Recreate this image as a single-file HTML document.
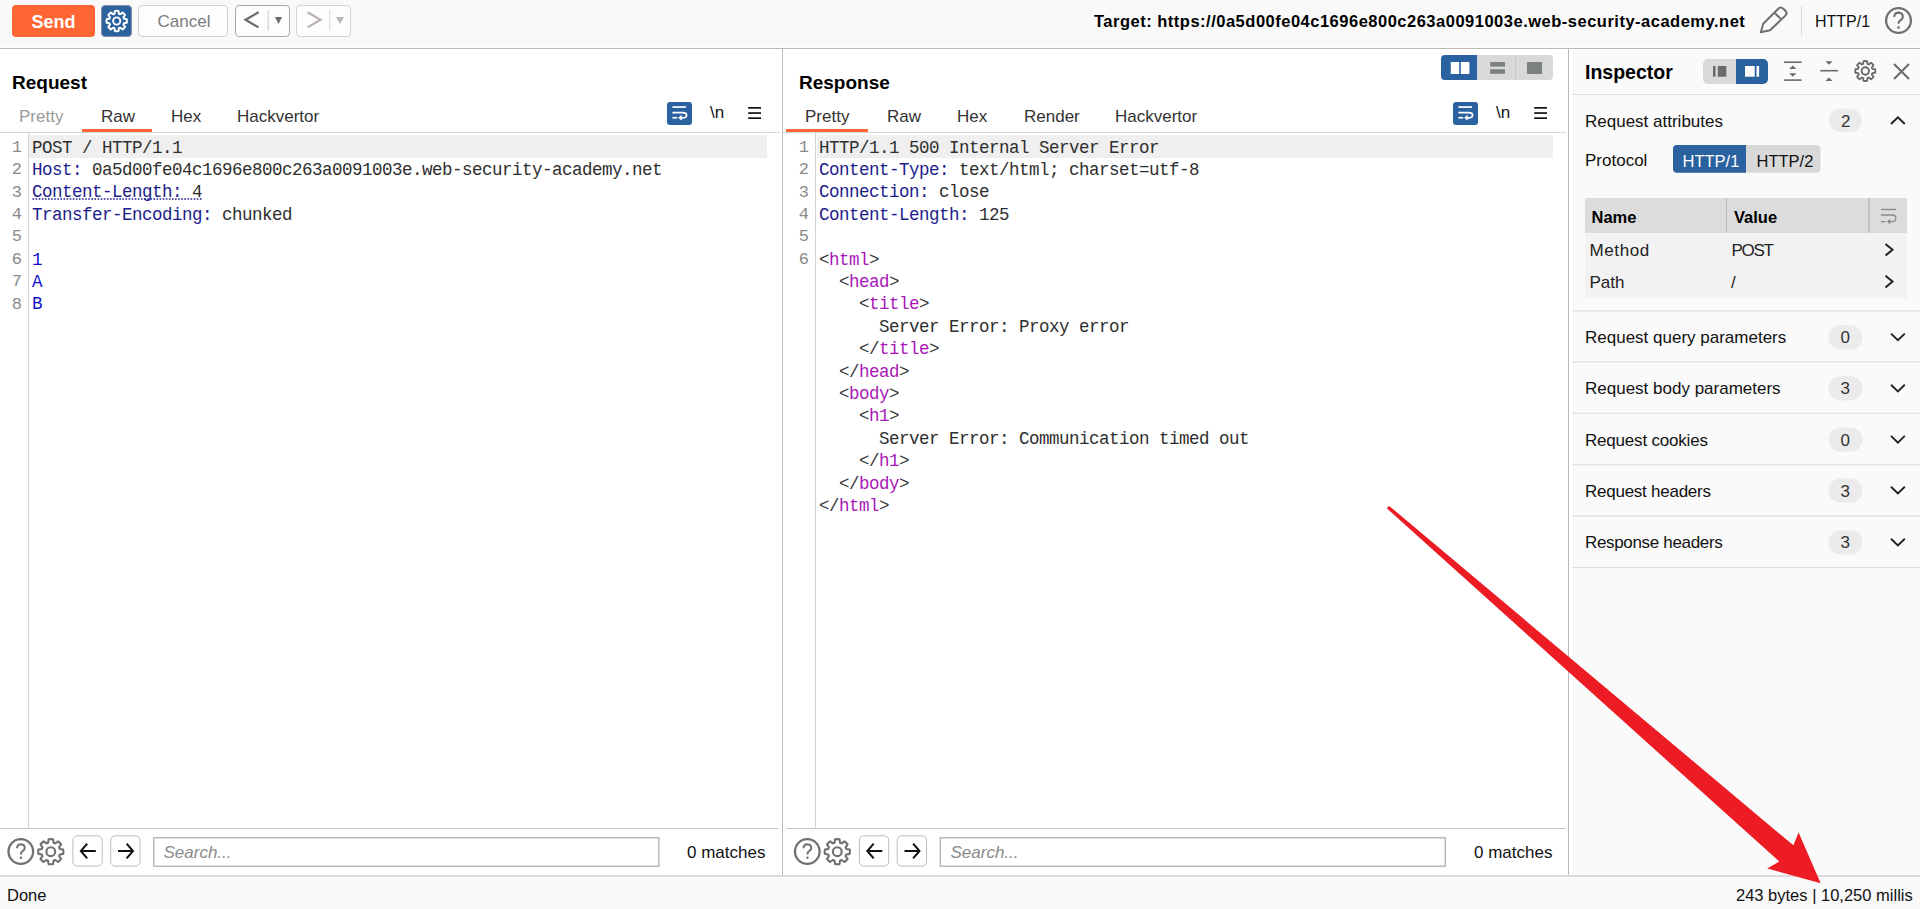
<!DOCTYPE html>
<html><head><meta charset="utf-8">
<style>
*{box-sizing:border-box;margin:0;padding:0}
html,body{width:1920px;height:909px;overflow:hidden;background:#fff;font-family:"Liberation Sans",sans-serif;color:#1a1a1a}
.a{position:absolute}
.t{position:absolute;white-space:pre;line-height:1}
.hl{position:absolute;height:1px}
.vl{position:absolute;width:1px}
.mono{font-family:"Liberation Mono",monospace;font-size:17.5px;letter-spacing:-0.5px;line-height:22.4px;white-space:pre}
.btn{position:absolute;border-radius:4px;display:flex;align-items:center;justify-content:center}
.tab{position:absolute;font-size:17px;line-height:1;white-space:pre;color:#333;margin-top:1px}
.nk{color:#1c1c8c}
.nv{color:#2e2e2e}
.tg{color:#3a3a3a}
.tn{color:#a818b8}
.ln{position:absolute;font-family:"Liberation Mono",monospace;font-size:17px;line-height:22.4px;color:#8a8a8a;white-space:pre;text-align:right}
</style></head><body>

<!-- Toolbar -->
<div class="a" style="left:0;top:0;width:1920px;height:47px;background:#f9f9f9"></div>
<div class="hl" style="left:0;top:48px;width:1920px;background:#bdb9b9"></div>

<div class="btn" style="left:12px;top:5px;width:83px;height:32px;background:#ff6633;color:#fff;font-weight:bold;font-size:18px;padding-top:2px">Send</div>
<div class="btn" style="left:101px;top:5px;width:31px;height:32px;background:#2a62a0;border:1px solid #8a8fa8"></div>
<div class="btn" style="left:138px;top:5px;width:90px;height:32px;background:#fdfdfd;border:1px solid #d2d0d0;color:#7c7c7c;font-size:17px;padding:2px 0 0 2px">Cancel</div>
<div class="btn" style="left:235px;top:5px;width:55px;height:32px;background:#fdfdfd;border:1px solid #aca8a8"></div>
<div class="btn" style="left:296px;top:5px;width:55px;height:32px;background:#fdfdfd;border:1px solid #d4d2d2"></div>

<div class="t" style="left:1094px;top:13px;font-size:16.5px;font-weight:bold;color:#000;letter-spacing:0.5px">Target: https://0a5d00fe04c1696e800c263a0091003e.web-security-academy.net</div>
<div class="vl" style="left:1801px;top:6px;height:30px;background:#d8d8d8"></div>
<div class="t" style="left:1815px;top:14px;font-size:16px;color:#111">HTTP/1</div>


<!-- toolbar icons -->
<svg class="a" style="left:0;top:0" width="1920" height="48" viewBox="0 0 1920 48">
 <path d="M114.48,13.73 L114.93,10.95 A10.2,10.2 0 0 1 118.47,10.95 L118.92,13.73 A7.6,7.6 0 0 1 120.27,14.29 L122.55,12.64 A10.2,10.2 0 0 1 125.06,15.15 L123.41,17.43 A7.6,7.6 0 0 1 123.97,18.78 L126.75,19.23 A10.2,10.2 0 0 1 126.75,22.77 L123.97,23.22 A7.6,7.6 0 0 1 123.41,24.57 L125.06,26.85 A10.2,10.2 0 0 1 122.55,29.36 L120.27,27.71 A7.6,7.6 0 0 1 118.92,28.27 L118.47,31.05 A10.2,10.2 0 0 1 114.93,31.05 L114.48,28.27 A7.6,7.6 0 0 1 113.13,27.71 L110.85,29.36 A10.2,10.2 0 0 1 108.34,26.85 L109.99,24.57 A7.6,7.6 0 0 1 109.43,23.22 L106.65,22.77 A10.2,10.2 0 0 1 106.65,19.23 L109.43,18.78 A7.6,7.6 0 0 1 109.99,17.43 L108.34,15.15 A10.2,10.2 0 0 1 110.85,12.64 L113.13,14.29 A7.6,7.6 0 0 1 114.48,13.73 Z" fill="none" stroke="#fff" stroke-width="2" stroke-linejoin="round"/>
 <circle cx="116.7" cy="21" r="3.6" fill="none" stroke="#fff" stroke-width="1.9"/>
 <path d="M258.5,12.2 L245.5,19.8 L258.5,27.4" fill="none" stroke="#6a6a6a" stroke-width="2.2"/>
 <rect x="267.5" y="10" width="1.5" height="20.5" fill="#d9d9d9"/>
 <path d="M275,17 L282,17 L278.5,24 Z" fill="#6a6a6a"/>
 <path d="M307.5,12.2 L320.5,19.8 L307.5,27.4" fill="none" stroke="#b8b2b2" stroke-width="2.2"/>
 <rect x="329" y="10" width="1.5" height="20.5" fill="#e2e2e2"/>
 <path d="M336,17 L344,17 L340,24 Z" fill="#bbb6b6"/>
 <path d="M1760.9,32.2 L1763.2,23.8 L1778.3,8.7 Q1780.8,6.3 1783.3,8.7 L1785.4,10.8 Q1787.8,13.3 1785.4,15.6 L1770.1,30.2 Z" fill="none" stroke="#6e6e6e" stroke-width="2" stroke-linejoin="round"/>
 <path d="M1775,13.2 L1780.6,18.8" stroke="#6e6e6e" stroke-width="2"/>
 <circle cx="1898.5" cy="20.5" r="12.4" fill="none" stroke="#707070" stroke-width="2.3"/>
 <path d="M1894.2,16.8 Q1894.6,12.6 1898.6,12.6 Q1902.8,12.8 1902.8,16.6 Q1902.8,19.3 1900,20.6 Q1898.6,21.4 1898.6,23.8" fill="none" stroke="#707070" stroke-width="2.1"/>
 <circle cx="1898.6" cy="27.6" r="1.3" fill="#707070"/>
</svg>

<!-- Panels -->
<div class="vl" style="left:782px;top:49px;height:827px;background:#bdb9b9"></div>
<div class="a" style="left:1572px;top:50px;width:348px;height:824px;background:#fafafa"></div>
<div class="vl" style="left:1568px;top:49px;height:827px;background:#bdb9b9"></div>


<!-- Request panel -->
<div class="t" style="left:12px;top:73px;font-size:19px;font-weight:bold;color:#000">Request</div>
<div class="tab" style="left:19px;top:107px;color:#9a9a9a">Pretty</div>
<div class="tab" style="left:101px;top:107px">Raw</div>
<div class="tab" style="left:171px;top:107px">Hex</div>
<div class="tab" style="left:237px;top:107px">Hackvertor</div>
<div class="a" style="left:82px;top:129px;width:70px;height:3px;background:#ff6633"></div>
<div class="hl" style="left:0;top:132px;width:780px;background:#d5d8d8"></div>
<div class="a" style="left:667px;top:102px;width:25px;height:23px;background:#2a62a0;border-radius:3px"></div>
<div class="t" style="left:710px;top:104px;font-size:17px;color:#111">\n</div>
<div class="vl" style="left:28px;top:133px;height:695px;background:#d4d4d4"></div>
<div class="a" style="left:29px;top:135px;width:738px;height:23px;background:#efefef"></div>
<div class="ln" style="left:0;top:136.8px;width:22px">1
2
3
4
5
6
7
8</div>
<div class="a mono" style="left:32px;top:136.6px;color:#2e2e2e">POST / HTTP/1.1
<span class="nk">Host:</span> 0a5d00fe04c1696e800c263a0091003e.web-security-academy.net
<span class="nk">Content-Length:</span> 4
<span class="nk">Transfer-Encoding:</span> chunked

<span style="color:#1010c8">1
A
B</span></div>
<div class="hl" style="left:0;top:828px;width:778px;background:#c8c4c4"></div>
<svg class="a" style="left:0;top:196px" width="210" height="6"><line x1="32.5" y1="3" x2="203" y2="3" stroke="#1c1c8c" stroke-width="1.6" stroke-dasharray="1.6 1.5"/></svg>

<!-- Response panel -->
<div class="t" style="left:799px;top:73px;font-size:19px;font-weight:bold;color:#000">Response</div>
<div class="tab" style="left:805px;top:107px">Pretty</div>
<div class="tab" style="left:887px;top:107px">Raw</div>
<div class="tab" style="left:957px;top:107px">Hex</div>
<div class="tab" style="left:1024px;top:107px">Render</div>
<div class="tab" style="left:1115px;top:107px">Hackvertor</div>
<div class="a" style="left:786px;top:129px;width:82px;height:3px;background:#ff6633"></div>
<div class="hl" style="left:783px;top:132px;width:783px;background:#d5d8d8"></div>
<div class="a" style="left:1453px;top:102px;width:25px;height:23px;background:#2a62a0;border-radius:3px"></div>
<div class="t" style="left:1496px;top:104px;font-size:17px;color:#111">\n</div>
<div class="vl" style="left:815px;top:133px;height:695px;background:#d4d4d4"></div>
<div class="a" style="left:817px;top:135px;width:736px;height:23px;background:#efefef"></div>
<div class="ln" style="left:783px;top:136.8px;width:26px">1
2
3
4
5
6</div>
<div class="a mono" style="left:819px;top:136.6px;color:#2e2e2e">HTTP/1.1 500 Internal Server Error
<span class="nk">Content-Type:</span> text/html; charset=utf-8
<span class="nk">Connection:</span> close
<span class="nk">Content-Length:</span> 125

<span class="tg">&lt;</span><span class="tn">html</span><span class="tg">&gt;</span>
  <span class="tg">&lt;</span><span class="tn">head</span><span class="tg">&gt;</span>
    <span class="tg">&lt;</span><span class="tn">title</span><span class="tg">&gt;</span>
      Server Error: Proxy error
    <span class="tg">&lt;/</span><span class="tn">title</span><span class="tg">&gt;</span>
  <span class="tg">&lt;/</span><span class="tn">head</span><span class="tg">&gt;</span>
  <span class="tg">&lt;</span><span class="tn">body</span><span class="tg">&gt;</span>
    <span class="tg">&lt;</span><span class="tn">h1</span><span class="tg">&gt;</span>
      Server Error: Communication timed out
    <span class="tg">&lt;/</span><span class="tn">h1</span><span class="tg">&gt;</span>
  <span class="tg">&lt;/</span><span class="tn">body</span><span class="tg">&gt;</span>
<span class="tg">&lt;/</span><span class="tn">html</span><span class="tg">&gt;</span></div>
<div class="hl" style="left:786px;top:828px;width:780px;background:#c8c4c4"></div>



<!-- panel icons -->
<svg class="a" style="left:0;top:0" width="1920" height="909" viewBox="0 0 1920 909">
<g transform="translate(0,0)">
 <rect x="672.4" y="106.2" width="13.6" height="1.7" fill="#fff"/>
 <path d="M672.4,112.6 L682.5,112.6 Q686.6,112.6 686.6,115.2 Q686.6,117.8 682.5,117.8 L680.2,117.8" fill="none" stroke="#fff" stroke-width="1.7"/>
 <path d="M681.3,115.6 L678.6,117.8 L681.3,120 Z" fill="#fff" stroke="#fff" stroke-width="0.8"/>
 <rect x="672.4" y="116.9" width="4.8" height="1.7" fill="#fff"/>
 <rect x="748.2" y="107" width="12.8" height="1.7" fill="#111"/>
 <rect x="748.2" y="112.2" width="12.8" height="1.7" fill="#111"/>
 <rect x="748.2" y="117.3" width="12.8" height="1.7" fill="#111"/>
</g>
<g transform="translate(786,0)">
 <rect x="672.4" y="106.2" width="13.6" height="1.7" fill="#fff"/>
 <path d="M672.4,112.6 L682.5,112.6 Q686.6,112.6 686.6,115.2 Q686.6,117.8 682.5,117.8 L680.2,117.8" fill="none" stroke="#fff" stroke-width="1.7"/>
 <path d="M681.3,115.6 L678.6,117.8 L681.3,120 Z" fill="#fff" stroke="#fff" stroke-width="0.8"/>
 <rect x="672.4" y="116.9" width="4.8" height="1.7" fill="#fff"/>
 <rect x="748.2" y="107" width="12.8" height="1.7" fill="#111"/>
 <rect x="748.2" y="112.2" width="12.8" height="1.7" fill="#111"/>
 <rect x="748.2" y="117.3" width="12.8" height="1.7" fill="#111"/>
</g>
 <path d="M1445,55 L1477,55 L1477,80 L1445,80 Q1441,80 1441,76 L1441,59 Q1441,55 1445,55 Z" fill="#2a62a0"/>
 <path d="M1477,55 L1549,55 Q1553,55 1553,59 L1553,76 Q1553,80 1549,80 L1477,80 Z" fill="#d9d9d9"/>
 <rect x="1515" y="55" width="1" height="25" fill="#c8c8c8"/>
 <rect x="1450.8" y="62" width="8.4" height="12" fill="#fff"/>
 <rect x="1460.8" y="62" width="8.6" height="12" fill="#fff"/>
 <rect x="1490.2" y="62" width="14.8" height="4.6" fill="#7d8080"/>
 <rect x="1490.2" y="69.2" width="14.8" height="4.6" fill="#7d8080"/>
 <rect x="1527" y="62" width="15" height="12" fill="#7d8080"/>
<g>
 <circle cx="20.8" cy="851.5" r="12.3" fill="none" stroke="#707070" stroke-width="2.3"/>
 <path d="M17,848.2 Q17.2,844.2 20.9,844.2 Q24.7,844.4 24.7,847.8 Q24.7,850.2 22.3,851.3 Q20.9,852 20.9,854.4" fill="none" stroke="#707070" stroke-width="2"/>
 <circle cx="20.9" cy="857.8" r="1.2" fill="#707070"/>
 <path d="M48.05,842.71 L48.61,839.29 A12.6,12.6 0 0 1 52.99,839.29 L53.55,842.71 A9.4,9.4 0 0 1 55.21,843.40 L58.03,841.38 A12.6,12.6 0 0 1 61.12,844.47 L59.10,847.29 A9.4,9.4 0 0 1 59.79,848.95 L63.21,849.51 A12.6,12.6 0 0 1 63.21,853.89 L59.79,854.45 A9.4,9.4 0 0 1 59.10,856.11 L61.12,858.93 A12.6,12.6 0 0 1 58.03,862.02 L55.21,860.00 A9.4,9.4 0 0 1 53.55,860.69 L52.99,864.11 A12.6,12.6 0 0 1 48.61,864.11 L48.05,860.69 A9.4,9.4 0 0 1 46.39,860.00 L43.57,862.02 A12.6,12.6 0 0 1 40.48,858.93 L42.50,856.11 A9.4,9.4 0 0 1 41.81,854.45 L38.39,853.89 A12.6,12.6 0 0 1 38.39,849.51 L41.81,848.95 A9.4,9.4 0 0 1 42.50,847.29 L40.48,844.47 A12.6,12.6 0 0 1 43.57,841.38 L46.39,843.40 A9.4,9.4 0 0 1 48.05,842.71 Z" fill="none" stroke="#707070" stroke-width="2.1" stroke-linejoin="round"/>
 <circle cx="50.8" cy="851.7" r="4.4" fill="none" stroke="#707070" stroke-width="2.1"/>
 <rect x="72.9" y="835.8" width="29.3" height="30.3" rx="4.5" fill="#fff" stroke="#bebaba" stroke-width="1"/>
 <rect x="110.7" y="835.8" width="29.3" height="30.3" rx="4.5" fill="#fff" stroke="#bebaba" stroke-width="1"/>
 <path d="M87.2,843.6 L80.8,851 L87.2,858.4 M80.8,851 L95.8,851" fill="none" stroke="#111" stroke-width="2"/>
 <path d="M118,851 L133,851 M126.6,843.6 L133,851 L126.6,858.4" fill="none" stroke="#111" stroke-width="2"/>
 <rect x="153.8" y="837.8" width="505" height="28.4" fill="#fff" stroke="#b2aeae" stroke-width="1.3"/>
</g>
<g>
 <circle cx="807.3" cy="851.5" r="12.3" fill="none" stroke="#707070" stroke-width="2.3"/>
 <path d="M803.5,848.2 Q803.7,844.2 807.4,844.2 Q811.2,844.4 811.2,847.8 Q811.2,850.2 808.8,851.3 Q807.4,852 807.4,854.4" fill="none" stroke="#707070" stroke-width="2"/>
 <circle cx="807.4" cy="857.8" r="1.2" fill="#707070"/>
 <path d="M834.55,842.71 L835.11,839.29 A12.6,12.6 0 0 1 839.49,839.29 L840.05,842.71 A9.4,9.4 0 0 1 841.71,843.40 L844.53,841.38 A12.6,12.6 0 0 1 847.62,844.47 L845.60,847.29 A9.4,9.4 0 0 1 846.29,848.95 L849.71,849.51 A12.6,12.6 0 0 1 849.71,853.89 L846.29,854.45 A9.4,9.4 0 0 1 845.60,856.11 L847.62,858.93 A12.6,12.6 0 0 1 844.53,862.02 L841.71,860.00 A9.4,9.4 0 0 1 840.05,860.69 L839.49,864.11 A12.6,12.6 0 0 1 835.11,864.11 L834.55,860.69 A9.4,9.4 0 0 1 832.89,860.00 L830.07,862.02 A12.6,12.6 0 0 1 826.98,858.93 L829.00,856.11 A9.4,9.4 0 0 1 828.31,854.45 L824.89,853.89 A12.6,12.6 0 0 1 824.89,849.51 L828.31,848.95 A9.4,9.4 0 0 1 829.00,847.29 L826.98,844.47 A12.6,12.6 0 0 1 830.07,841.38 L832.89,843.40 A9.4,9.4 0 0 1 834.55,842.71 Z" fill="none" stroke="#707070" stroke-width="2.1" stroke-linejoin="round"/>
 <circle cx="837.3" cy="851.7" r="4.4" fill="none" stroke="#707070" stroke-width="2.1"/>
 <rect x="859.4" y="835.8" width="29.3" height="30.3" rx="4.5" fill="#fff" stroke="#bebaba" stroke-width="1"/>
 <rect x="897.2" y="835.8" width="29.3" height="30.3" rx="4.5" fill="#fff" stroke="#bebaba" stroke-width="1"/>
 <path d="M873.7,843.6 L867.3,851 L873.7,858.4 M867.3,851 L882.3,851" fill="none" stroke="#111" stroke-width="2"/>
 <path d="M904.5,851 L919.5,851 M913.1,843.6 L919.5,851 L913.1,858.4" fill="none" stroke="#111" stroke-width="2"/>
 <rect x="940.3" y="837.8" width="505" height="28.4" fill="#fff" stroke="#b2aeae" stroke-width="1.3"/>
</g>
</svg>
<div class="t" style="left:163.5px;top:844px;font-size:17px;font-style:italic;color:#8a8a8a">Search...</div>
<div class="t" style="left:950.5px;top:844px;font-size:17px;font-style:italic;color:#8a8a8a">Search...</div>
<div class="t" style="left:687px;top:843.6px;font-size:17px;color:#111">0 matches</div>
<div class="t" style="left:1474px;top:843.6px;font-size:17px;color:#111">0 matches</div>

<!-- Inspector -->
<div class="t" style="left:1585px;top:63.3px;font-size:19.5px;font-weight:bold;color:#000">Inspector</div>
<div class="a" style="left:1703px;top:59px;width:65px;height:25px;background:#d9d9d9;border-radius:5px"></div>
<div class="a" style="left:1736px;top:59px;width:32px;height:25px;background:#2a62a0;border-radius:0 5px 5px 0"></div>
<svg class="a" style="left:1569px;top:49px" width="351" height="827" viewBox="1569 49 351 827">
 <rect x="1713" y="66" width="2.5" height="10.7" fill="#6a6a6a"/>
 <rect x="1717.8" y="66" width="8.5" height="10.7" fill="#6a6a6a"/>
 <rect x="1745" y="66" width="9.7" height="10.7" fill="#fff"/>
 <rect x="1756.5" y="66" width="2.6" height="10.7" fill="#fff"/>
 <rect x="1784" y="61.4" width="17.6" height="1.6" fill="#6a6a6a"/>
 <rect x="1784" y="79.3" width="17.6" height="1.6" fill="#6a6a6a"/>
 <path d="M1789.2,69 L1796.4,69 L1792.8,65.6 Z" fill="#6a6a6a"/>
 <path d="M1789.2,73.2 L1796.4,73.2 L1792.8,76.8 Z" fill="#6a6a6a"/>
 <rect x="1820.3" y="69.9" width="17.6" height="1.6" fill="#6a6a6a"/>
 <path d="M1825.4,61.2 L1832.6,61.2 L1829,64.8 Z" fill="#6a6a6a"/>
 <path d="M1825.4,81 L1832.6,81 L1829,77.4 Z" fill="#6a6a6a"/>
 <path d="M1863.14,63.92 L1863.56,61.15 A10,10 0 0 1 1867.04,61.15 L1867.46,63.92 A7.4,7.4 0 0 1 1868.77,64.47 L1871.04,62.81 A10,10 0 0 1 1873.49,65.26 L1871.83,67.53 A7.4,7.4 0 0 1 1872.38,68.84 L1875.15,69.26 A10,10 0 0 1 1875.15,72.74 L1872.38,73.16 A7.4,7.4 0 0 1 1871.83,74.47 L1873.49,76.74 A10,10 0 0 1 1871.04,79.19 L1868.77,77.53 A7.4,7.4 0 0 1 1867.46,78.08 L1867.04,80.85 A10,10 0 0 1 1863.56,80.85 L1863.14,78.08 A7.4,7.4 0 0 1 1861.83,77.53 L1859.56,79.19 A10,10 0 0 1 1857.11,76.74 L1858.77,74.47 A7.4,7.4 0 0 1 1858.22,73.16 L1855.45,72.74 A10,10 0 0 1 1855.45,69.26 L1858.22,68.84 A7.4,7.4 0 0 1 1858.77,67.53 L1857.11,65.26 A10,10 0 0 1 1859.56,62.81 L1861.83,64.47 A7.4,7.4 0 0 1 1863.14,63.92 Z" fill="none" stroke="#6a6a6a" stroke-width="1.9" stroke-linejoin="round"/>
 <circle cx="1865.3" cy="71" r="3.7" fill="none" stroke="#6a6a6a" stroke-width="1.9"/>
 <path d="M1894,64 L1909,79 M1909,64 L1894,79" stroke="#6a6a6a" stroke-width="2"/>
 <rect x="1572" y="94" width="348" height="1" fill="#dcdcdc"/>
 <rect x="1829" y="108.5" width="33" height="23.5" rx="11.7" fill="#ebebeb"/>
 <path d="M1891,124 L1897.9,117.4 L1904.8,124" fill="none" stroke="#222" stroke-width="1.9"/>
 <rect x="1673" y="145" width="147.5" height="27.7" rx="4" fill="#d9d9d9"/>
 <path d="M1677,145 L1746,145 L1746,172.7 L1677,172.7 Q1673,172.7 1673,168.7 L1673,149 Q1673,145 1677,145 Z" fill="#2a62a0"/>
 <rect x="1585" y="198" width="322" height="35" fill="#dcdcdc"/>
 <rect x="1585" y="233" width="322" height="65" fill="#f2f2f2"/>
 <rect x="1726" y="198" width="1" height="35" fill="#b8b8b8"/>
 <rect x="1868.5" y="198" width="1.2" height="35" fill="#b0b0b0"/>
 <rect x="1881" y="208.8" width="15" height="1.3" fill="#8a8a8a"/>
 <path d="M1881,215 L1892.5,215 Q1895.8,215 1895.8,218.2 Q1895.8,221.6 1892.5,221.6 L1888.5,221.6 M1890.2,219.6 L1888,221.6 L1890.2,223.6" fill="none" stroke="#8a8a8a" stroke-width="1.3"/>
 <rect x="1881" y="221" width="4.5" height="1.3" fill="#8a8a8a"/>
 <path d="M1885.5,244 L1892.5,249.8 L1885.5,255.6" fill="none" stroke="#222" stroke-width="2"/>
 <path d="M1885.5,275.8 L1892.5,281.6 L1885.5,287.4" fill="none" stroke="#222" stroke-width="2"/>
 <rect x="1572" y="310.3" width="348" height="1.2" fill="#dedede"/>
 <rect x="1572" y="361.3" width="348" height="1.2" fill="#dedede"/>
 <rect x="1572" y="412.7" width="348" height="1.2" fill="#dedede"/>
 <rect x="1572" y="464.2" width="348" height="1.2" fill="#dedede"/>
 <rect x="1572" y="515.3" width="348" height="1.2" fill="#dedede"/>
 <rect x="1572" y="566.8" width="348" height="1.2" fill="#dedede"/>
 <rect x="1828.5" y="325.2" width="34" height="24.2" rx="12" fill="#ebebeb"/>
 <path d="M1891,333.6 L1897.9,340.3 L1904.8,333.6" fill="none" stroke="#222" stroke-width="1.9"/>
 <rect x="1828.5" y="376.3" width="34" height="24.2" rx="12" fill="#ebebeb"/>
 <path d="M1891,384.7 L1897.9,391.4 L1904.8,384.7" fill="none" stroke="#222" stroke-width="1.9"/>
 <rect x="1828.5" y="427.5" width="34" height="24.2" rx="12" fill="#ebebeb"/>
 <path d="M1891,435.9 L1897.9,442.6 L1904.8,435.9" fill="none" stroke="#222" stroke-width="1.9"/>
 <rect x="1828.5" y="478.4" width="34" height="24.2" rx="12" fill="#ebebeb"/>
 <path d="M1891,486.8 L1897.9,493.5 L1904.8,486.8" fill="none" stroke="#222" stroke-width="1.9"/>
 <rect x="1828.5" y="530.3" width="34" height="24.2" rx="12" fill="#ebebeb"/>
 <path d="M1891,538.7 L1897.9,545.4 L1904.8,538.7" fill="none" stroke="#222" stroke-width="1.9"/>
</svg>
<div class="t" style="left:1585px;top:112.61px;font-size:17px;color:#111">Request attributes</div>
<div class="t" style="left:1841px;top:112.61px;font-size:17px;color:#333">2</div>
<div class="t" style="left:1585px;top:152.2px;font-size:17px;color:#111">Protocol</div>
<div class="t" style="left:1682.5px;top:152.6px;font-size:16.5px;color:#fff">HTTP/1</div>
<div class="t" style="left:1756.5px;top:152.6px;font-size:16.5px;color:#111">HTTP/2</div>
<div class="t" style="left:1591.5px;top:208.6px;font-size:16.5px;font-weight:bold;color:#000">Name</div>
<div class="t" style="left:1734px;top:208.6px;font-size:16.5px;font-weight:bold;color:#000">Value</div>
<div class="t" style="left:1589.5px;top:242.2px;font-size:17px;color:#222;letter-spacing:0.6px">Method</div>
<div class="t" style="left:1731.5px;top:242.2px;font-size:17px;color:#222;letter-spacing:-1.3px">POST</div>
<div class="t" style="left:1589.5px;top:274.4px;font-size:17px;color:#222">Path</div>
<div class="t" style="left:1731px;top:274.4px;font-size:17px;color:#222">/</div>
<div class="t" style="left:1585px;top:329.31px;font-size:17px;color:#111">Request query parameters</div>
<div class="t" style="left:1840.5px;top:329.31px;font-size:17px;color:#333">0</div>
<div class="t" style="left:1585px;top:380.41px;font-size:17px;color:#111">Request body parameters</div>
<div class="t" style="left:1840.5px;top:380.41px;font-size:17px;color:#333">3</div>
<div class="t" style="left:1585px;top:431.61px;font-size:17px;color:#111;letter-spacing:-0.2px">Request cookies</div>
<div class="t" style="left:1840.5px;top:431.61px;font-size:17px;color:#333">0</div>
<div class="t" style="left:1585px;top:482.51px;font-size:17px;color:#111;letter-spacing:-0.25px">Request headers</div>
<div class="t" style="left:1840.5px;top:482.51px;font-size:17px;color:#333">3</div>
<div class="t" style="left:1585px;top:534.41px;font-size:17px;color:#111;letter-spacing:-0.33px">Response headers</div>
<div class="t" style="left:1840.5px;top:534.41px;font-size:17px;color:#333">3</div>

<!-- Status bar -->
<div class="a" style="left:0;top:876px;width:1920px;height:33px;background:#f9f9f9"></div>
<div class="a" style="left:0;top:875px;width:1920px;height:2px;background:#dcdada"></div>
<div class="t" style="left:7px;top:887px;font-size:16.5px;color:#111">Done</div>
<div class="t" style="left:1736px;top:887px;font-size:16.5px;color:#111">243 bytes | 10,250 millis</div>


<!-- red arrow -->
<svg class="a" style="left:0;top:0" width="1920" height="909" viewBox="0 0 1920 909">
 <g transform="translate(1820.7,883.3) rotate(41)">
  <path d="M0,0 L-50,-23.8 L-45.5,-10.7 L-572,-1.75 A1.75,1.75 0 0 0 -572,1.75 L-45.5,10.7 L-50,24 Z" fill="#ed1c24"/>
 </g>
</svg>

</body></html>
